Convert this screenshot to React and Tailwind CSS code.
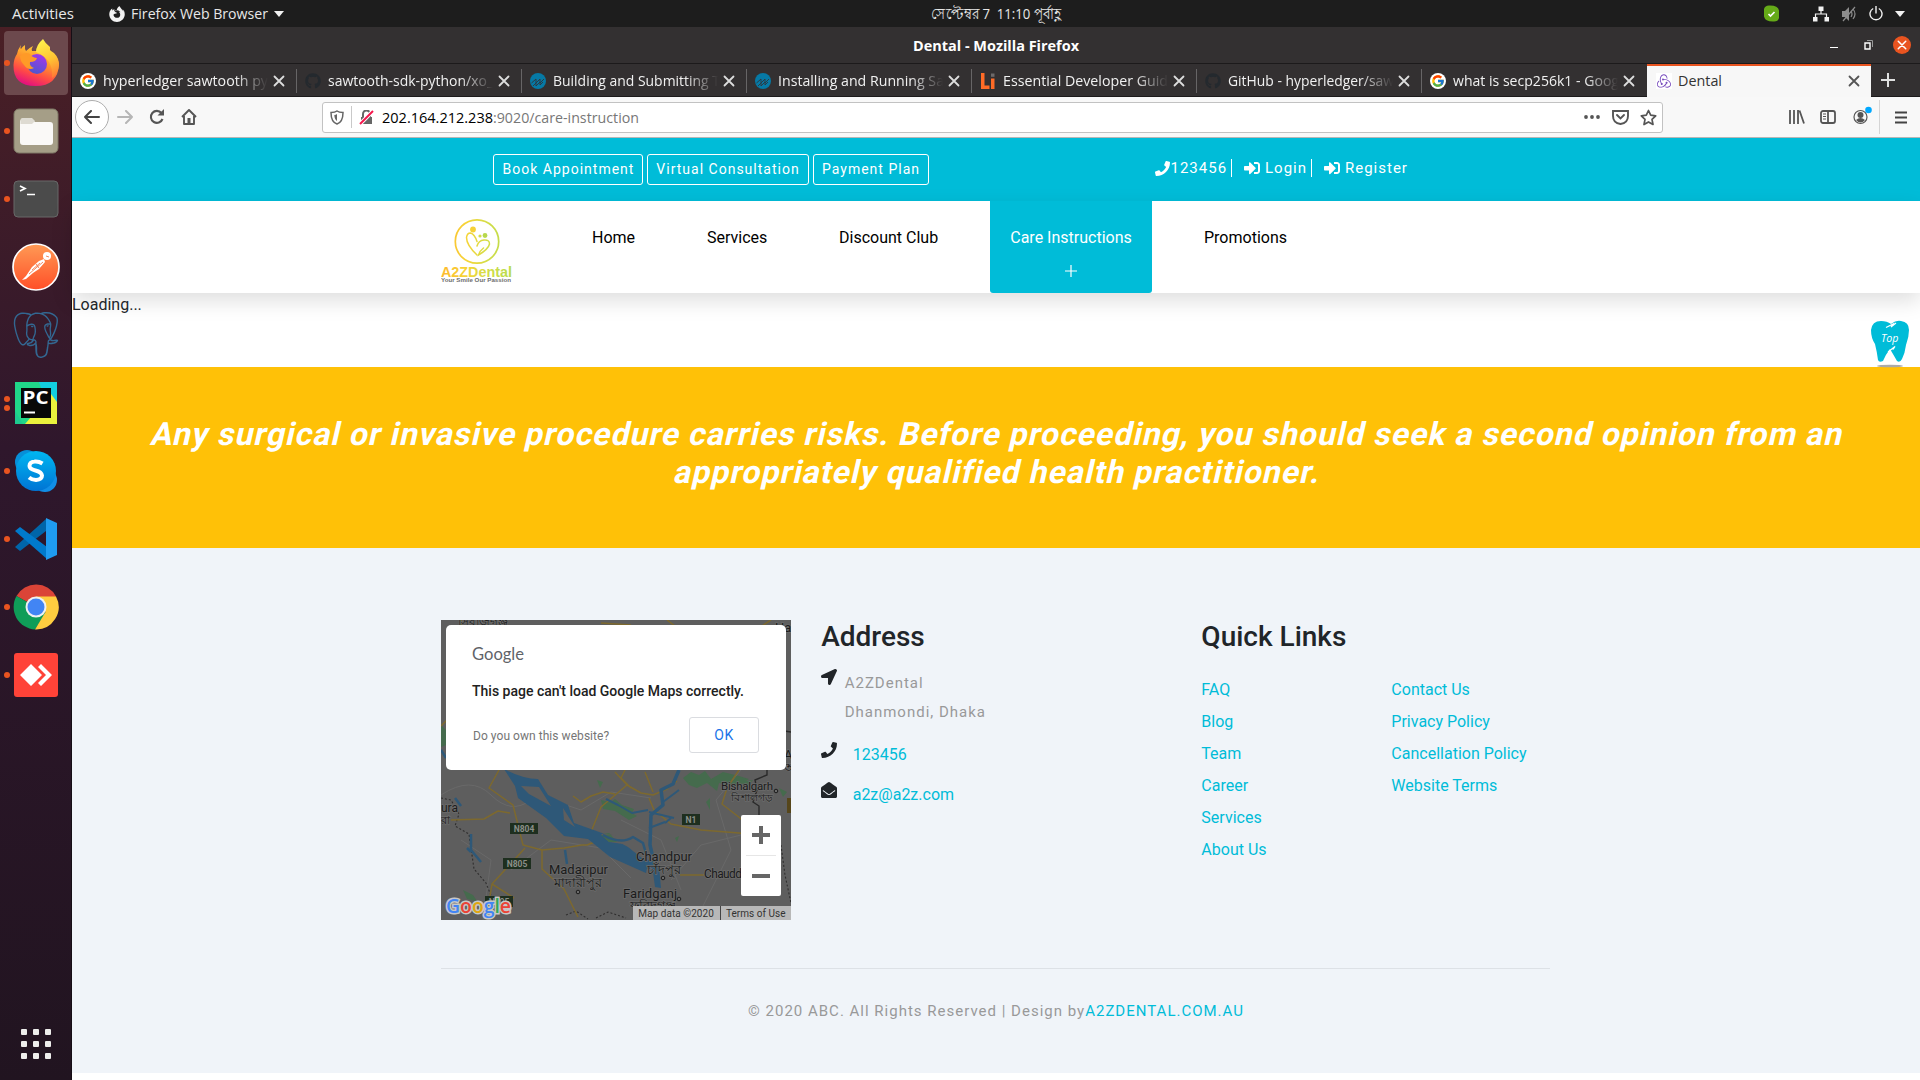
import React from "react";
import { FaPhone, FaSignInAlt, FaLocationArrow, FaEnvelopeOpen, FaGithub } from "react-icons/fa";
import { FcGoogle } from "react-icons/fc";
import { SiRedux, SiPostgresql, SiFirefoxbrowser } from "react-icons/si";

const ui = "font-['Open_Sans','Noto_Sans',sans-serif]";

function Fit({ w, children, className = "", size = 15, family = "Open Sans", weight = 400 }) {
  return (
    <svg width={w} height="20" className={`shrink-0 overflow-visible ${className}`}>
      <text x="0" y="15" fontSize={size} fontWeight={weight} fontFamily={`'${family}','Noto Sans',sans-serif`} textLength={w} lengthAdjust="spacingAndGlyphs" fill="currentColor">{children}</text>
    </svg>
  );
}

function Close({ className = "" }) {
  return (
    <svg width="12" height="12" viewBox="0 0 12 12" className={className} stroke="currentColor" strokeWidth="1.8" strokeLinecap="round">
      <path d="M1.5 1.5 10.5 10.5M10.5 1.5 1.5 10.5" />
    </svg>
  );
}

function Favicon({ kind }) {
  if (kind === "google")
    return <span className="flex size-4 items-center justify-center rounded-full bg-white"><FcGoogle size={14} /></span>;
  if (kind === "github") return <FaGithub size={16} color="#24292e" />;
  if (kind === "sawtooth")
    return (
      <svg width="16" height="16" viewBox="0 0 16 16">
        <circle cx="8" cy="8" r="8" fill="#0679a5" />
        <path d="M1.500 10 6 6v4l4-4v4l4-4M3 13l3-3v3l4-4v3l3-3" fill="none" stroke="#2c3b44" strokeWidth="1" />
      </svg>
    );
  if (kind === "li")
    return (
      <svg width="16" height="16" viewBox="0 0 16 16">
        <path d="M1 0h3.500v12.500H9.500V16H1z" fill="#ff6b26" /><path d="M11 5.500h3.500V16H11z" fill="#ff6b26" /><path d="M11 .5h3.500v3.300H11z" fill="#6d6a6b" />
      </svg>
    );
  return <span className="flex size-4 items-center justify-center bg-white"><SiRedux size={14} color="#764abc" /></span>;
}

const tabs = [
  ["google", "hyperledger sawtooth py", 165],
  ["github", "sawtooth-sdk-python/xo_", 165],
  ["sawtooth", "Building and Submitting T", 167],
  ["sawtooth", "Installing and Running Sa", 166],
  ["li", "Essential Developer Guid", 165],
  ["github", "GitHub - hyperledger/saw", 166],
  ["google", "what is secp256k1 - Goog", 166],
];

function TopPanel() {
  return (
    <header className="grid h-[27px] shrink-0 grid-cols-3 items-center bg-[#1d1d1d] text-[#e8e8e8]">
      <div className="flex items-center">
        <Fit w={62} className="ml-3">Activities</Fit>
        <SiFirefoxbrowser size={16} className="ml-[35px] text-[#f2f2f2]" />
        <Fit w={137} className="ml-[6px]">Firefox Web Browser</Fit>
        <svg width="10" height="6" className="ml-[6px]"><path d="M0 0h10L5 6z" fill="#f2f2f2" /></svg>
      </div>
      <div className="flex justify-center pl-[71px]">
        <Fit w={130} size={14.5}>{"সেপ্টেম্বর 7\u00a0 11:10 পূর্বাহ্ণ"}</Fit>
      </div>
      <div className="flex items-center justify-end pr-[15px]">
        <svg width="17" height="17" viewBox="0 0 17 17"><path d="M1 4q1-4 6-3.500 8 0 9 5V13q-1 4-6 3.500-8 0-9-5z" fill="#65aa18" /><path d="m5.500 9 2 2L11.500 7" fill="none" stroke="#fff" strokeWidth="1.700" /></svg>
        <svg width="16" height="16" viewBox="0 0 16 16" className="ml-[33px]" fill="#f2f2f2"><path d="M5.500 0.500h5v4.500h-5zM0 11h4.500v4.500H0zM11.500 11H16v4.500h-4.500z" /><path d="M8 4v4M2.500 12V8h11v4" fill="none" stroke="#f2f2f2" strokeWidth="1.200" /></svg>
        <svg width="16" height="16" viewBox="0 0 16 16" className="ml-3"><path d="M1 5h3l4-4v14l-4-4H1z" fill="#8c8c8c" /><path d="M10 5q2 3 0 6M12 3q4 5 0 10M14 1 2 15" fill="none" stroke="#8c8c8c" strokeWidth="1.2" /></svg>
        <svg width="14" height="15" viewBox="0 0 14 15" className="ml-3" fill="none" stroke="#f2f2f2" strokeWidth="1.4"><path d="M4.2 2.5a6 6 0 1 0 5.6 0M7 0v7.5" /></svg>
        <svg width="10" height="6" className="ml-[12px]"><path d="M0 0h10L5 6z" fill="#f2f2f2" /></svg>
      </div>
    </header>
  );
}

function Firefox() {
  return (
    <svg width="48" height="48" viewBox="0 0 48 48" className="-mt-[3px]">
      <defs>
        <linearGradient id="fx" x1=".75" y1=".1" x2=".35" y2="1"><stop offset="0" stopColor="#ffd53e" /><stop offset=".35" stopColor="#ff9a2b" /><stop offset=".7" stopColor="#ff4a46" /><stop offset="1" stopColor="#e3107f" /></linearGradient>
        <linearGradient id="fy" x1=".4" y1="0" x2=".7" y2="1"><stop offset="0" stopColor="#fff14a" /><stop offset=".55" stopColor="#ffc233" /><stop offset="1" stopColor="#ff7a35" /></linearGradient>
        <linearGradient id="fg" x1=".7" y1="0" x2=".3" y2="1"><stop offset="0" stopColor="#a436ea" /><stop offset="1" stopColor="#4b58cc" /></linearGradient>
      </defs>
      <path d="M9 11q1-2 4-4-.5 4 1 6 3-3 7-5-2 3-1 5h13q13 3 14 13-1 22-23.500 22T1.500 27Q2 20 5 16q.5-4 4-9-1 3 0 4z" fill="url(#fx)" />
      <path d="M24 14q0-7 7-13 2 4 7 8-.5 3 1 4l3 2q5 5 5 12-1 9-7 13 2-19-16-26z" fill="url(#fy)" />
      <circle cx="25" cy="26" r="10" fill="url(#fg)" />
      <path d="M8 18q5-5 10-2 1 3 7 4-1 4-7 4-1 4 4 6-6 3-10-3-4-4-4-9z" fill="#ff9a27" />
    </svg>
  );
}

const dock = [
  [1, <Firefox key="f" />],
  [1, <svg key="f" width="46" height="46" viewBox="0 0 46 46"><rect x="1" y="1" width="44" height="44" rx="5" fill="#a59e87" stroke="#7e7966" /><path d="M7 14q0-3 3-3h9l3 3h15q3 0 3 3v17q0 3-3 3H10q-3 0-3-3z" fill="#faf9f7" /><path d="M7.500 16v-4q0-2 2-2H19l3 3-3 3z" fill="#dedbd2" /></svg>],
  [1, <svg key="t" width="46" height="38" viewBox="0 0 46 38"><rect x="1" y="1" width="44" height="36" rx="4" fill="#4b4b4b" stroke="#686868" /><path d="m7 6 5 2.500-5 2.500M14 14.500h8" fill="none" stroke="#fff" strokeWidth="1.700" /></svg>],
  [0, <svg key="p" width="48" height="48" viewBox="0 0 48 48"><defs><linearGradient id="po" x2="0" y2="1"><stop stopColor="#ff9a55" /><stop offset="1" stopColor="#ff4f28" /></linearGradient></defs><circle cx="24" cy="24" r="23" fill="url(#po)" stroke="#fff" strokeWidth="1.700" /><circle cx="35" cy="13" r="4" fill="#fff" /><path d="m32 16 1 3-6 7-6 4-7 6-4 1 4-4 6-9 7-6z" fill="#fff" /><path d="m17 31 14-12M20 27l8-7M34 13l3 1M24 21l3 4" stroke="#f36b37" strokeWidth=".8" fill="none" /></svg>],
  [0, <SiPostgresql key="e" size={46} color="#336791" />],
  [2, <svg key="pc" width="42" height="42" viewBox="0 0 42 42"><path d="M0 0h42v42H0z" fill="#20d789" /><path d="M24 0h18v20l-8 10z" fill="#12cfe0" /><path d="M10 42 36 12l6 8v22z" fill="#eaf23d" /><path d="M0 29 8 42H0z" fill="#1dcb8f" /><path d="M6 6h30v30H6z" fill="#080808" /><text x="7.500" y="21.500" fontFamily="Open Sans" fontWeight="700" fontSize="17" textLength="26" lengthAdjust="spacingAndGlyphs" fill="#fff">PC</text><path d="M9 29.500h11v2H9z" fill="#fff" /></svg>],
  [1, <svg key="s" width="42" height="42" viewBox="0 0 42 42"><defs><linearGradient id="sk" x2="0" y2="1"><stop stopColor="#00b7f1" /><stop offset="1" stopColor="#0074d4" /></linearGradient></defs><circle cx="12" cy="12" r="12" fill="#078fd8" /><circle cx="30" cy="30" r="12" fill="#118ee6" /><circle cx="21" cy="21" r="20" fill="url(#sk)" /><path d="M27.500 13.500q-4-2.500-8-2-5 .5-5 4.500 0 3 6 4.500t6.500 5q0 4-6 4.500-4 0-7-2.500" fill="none" stroke="#fff" strokeWidth="4" /></svg>],
  [1, <svg key="v" width="42" height="42" viewBox="0 0 42 42"><path d="M0 29 31 1v12L5 33l-5-4z" fill="#0065a9" /><path d="m0 13 5-4 27 20v12L0 13z" fill="#007acc" /><path d="M31 0 42 5v32l-11 5z" fill="#1f9cf0" /></svg>],
  [1, <svg key="c" width="46" height="46" viewBox="0 0 46 46"><path d="M23 23 3.500 12A22.500 22.500 0 0 1 43 12.500z" fill="#db4437" /><path d="M23 23 3.500 12A22.500 22.500 0 0 0 22 45.500L33 29z" fill="#0f9d58" /><path d="M23 12.500h20A22.500 22.500 0 0 1 22 45.500L32.500 28z" fill="#ffcd40" /><circle cx="23" cy="23" r="10.500" fill="#f1f1f1" /><circle cx="23" cy="23" r="8.500" fill="#4285f4" /></svg>],
  [1, <svg key="a" width="44" height="44" viewBox="0 0 44 44"><rect width="44" height="44" rx="3" fill="#ff4338" /><path d="m6 22 11-11 11 11-11 11zM24 14l3-3 11 11-11 11-3-3 8-8z" fill="#fff" /></svg>],
];

function Dock() {
  return (
    <aside className="flex w-[72px] shrink-0 flex-col border-r border-[#160e16] bg-linear-to-b from-[#4a1f25] via-[#2f172c] via-40% to-[#211420] pt-[2px]">
      {dock.map(([dots, icon], i) => (
        <div key={i} className="mr-[3px] ml-[4px] flex h-[68px] shrink-0 items-center">
          <div className={`flex h-[64px] w-full items-center rounded-[4px] ${i === 0 ? "bg-[#6c494d]" : ""}`}>
            <div className="flex w-[6px] flex-col gap-[3px]">
              {Array.from({ length: dots }, (_, d) => <i key={d} className="size-[6px] rounded-full bg-[#e95420]" />)}
            </div>
            <div className="-ml-[6px] flex flex-1 items-center justify-center">{icon}</div>
          </div>
        </div>
      ))}
      <div className="mt-auto mb-[21px] ml-[21px] grid w-[30px] grid-cols-3 gap-[6px]">
        {Array.from({ length: 9 }, (_, i) => <i key={i} className="size-[6px] rounded-[1px] bg-[#eeeeec]" />)}
      </div>
    </aside>
  );
}

function BrowserChrome() {
  return (
    <>
      <div className="flex h-[37px] shrink-0 items-center border-b border-[#1c1a1b] bg-[#333031] text-white">
        <div className="w-[150px]" />
        <div className="flex flex-1 justify-center pt-[2px]"><Fit w={166} size={15} weight={700}>Dental - Mozilla Firefox</Fit></div>
        <div className="flex w-[150px] items-center justify-end pr-[9px]">
          <i className="mt-[5px] h-px w-2 bg-white" />
          <svg width="9" height="10" viewBox="0 0 9 10" className="ml-[26px]" fill="none" stroke="#fff"><path d="M1 3h5v6H1z" strokeWidth="1.400" /><path d="M3 .5h5.500V7" stroke="#999" /></svg>
          <span className="ml-[20px] flex size-[18px] items-center justify-center rounded-full bg-[#e95420]"><Close className="size-[10px]" /></span>
        </div>
      </div>
      <div className="flex h-[33px] shrink-0 border-b border-[#1c1a1b] bg-[#333031] text-[#f1f1f1]">
        {tabs.map(([kind, label, w], i) => (
          <div key={i} className="flex w-[225px] shrink-0 items-center pt-px pl-2">
            <Favicon kind={kind} />
            <div className="ml-[7px] w-[165px] overflow-hidden mask-r-from-80% mask-r-to-100%"><Fit w={w}>{label}</Fit></div>
            <Close className="ml-[5px] text-[#ddd]" />
            {i < 6 && <i className="ml-auto h-6 w-px bg-[#676566]" />}
          </div>
        ))}
        <div className="-mb-px flex h-[33px] w-[224px] shrink-0 items-center border-t-2 border-[#e95420] bg-[#f7f7f7] pb-[2px] pl-[9px]">
          <Favicon kind="redux" />
          <Fit w={44} className="ml-[6px] text-[#333]">Dental</Fit>
          <Close className="mr-[11px] ml-auto text-[#555]" />
        </div>
        <svg width="14" height="14" viewBox="0 0 14 14" className="mt-[9px] ml-[10px]" stroke="#e0e0e0" strokeWidth="2"><path d="M7 0v14M0 7h14" /></svg>
      </div>
      <div className="flex h-[41px] shrink-0 items-center border-b border-[#b6b6b6] bg-[#f8f8f8] text-[#555]">
        <span className="ml-[3px] flex size-[34px] items-center justify-center rounded-full border border-[#adadad] bg-white">
          <svg width="16" height="14" viewBox="0 0 16 14" fill="none" stroke="#444" strokeWidth="2" strokeLinecap="round" strokeLinejoin="round"><path d="M15 7H1M7 1 1 7l6 6" /></svg>
        </span>
        <svg width="16" height="14" viewBox="0 0 16 14" className="ml-[8px]" fill="none" stroke="#b6b6b6" strokeWidth="2" strokeLinecap="round" strokeLinejoin="round"><path d="M1 7h14M9 1l6 6-6 6" /></svg>
        <svg width="16" height="16" viewBox="0 0 16 16" className="ml-[16px]" fill="none" stroke="#555" strokeWidth="2.100"><path d="M12.500 4A6 6 0 1 0 13.500 10" /><path d="M15 0v6.500H8.500z" fill="#555" stroke="none" /></svg>
        <svg width="16" height="16" viewBox="0 0 16 16" className="ml-[16px]" fill="none" stroke="#555" strokeWidth="1.900" strokeLinejoin="round"><path d="M1 8 8 1l7 7M3 7v8h10V7" /><path d="M6.500 9h3v5h-3z" fill="#555" stroke="none" /></svg>
        <div className="ml-[125px] flex h-[31px] w-[1341px] items-center rounded-[3px] border border-[#c2c2c2] bg-white">
          <svg width="14" height="15" viewBox="0 0 14 15" className="ml-[7px]" fill="none" stroke="#666" strokeWidth="1.500"><path d="M1 2.500Q5 2.500 7 1q2 1.500 6 1.500Q13 12 7 14 1 12 1 2.500z" /><path d="M7 4v7Q4.500 9.500 4.300 5 6 4.800 7 4z" fill="#666" stroke="none" /></svg>
          <i className="ml-[7px] h-[22px] w-px bg-[#c9c9c9]" />
          <svg width="15" height="15" viewBox="0 0 15 15" className="ml-[7px]"><path d="M4 7V4a3.500 3.500 0 0 1 7 0v3" fill="none" stroke="#666" strokeWidth="2" /><path d="M2 7h11v7H2z" fill="#666" /><path d="M14 1 1 14" stroke="#fff" strokeWidth="4" /><path d="M14 1 1 14" stroke="#f5174d" strokeWidth="2" /></svg>
          <div className="mt-px ml-[8px] flex text-black"><Fit w={111} size={14.5}>202.164.212.238</Fit><Fit w={146} size={14.5} className="text-[#777]">:9020/care-instruction</Fit></div>
          <svg width="16" height="4" viewBox="0 0 16 4" className="ml-auto" fill="#555"><circle cx="2" cy="2" r="1.900" /><circle cx="8" cy="2" r="1.900" /><circle cx="14" cy="2" r="1.900" /></svg>
          <svg width="17" height="15" viewBox="0 0 17 15" className="ml-[12px]" fill="none" stroke="#555" strokeWidth="1.900"><path d="M1 1h15v5q0 7-7.500 8Q1 13 1 6z" /><path d="m5 5 3.500 3.500L12 5" strokeLinecap="round" /></svg>
          <svg width="17" height="17" viewBox="0 0 17 17" className="mr-[5px] ml-[11px]" fill="none" stroke="#555" strokeWidth="1.700" strokeLinejoin="round"><path d="m8.500 1.500 2.200 4.700 5 .6-3.700 3.500 1 5.200-4.500-2.600L4 15.500l1-5.200-3.700-3.500 5-.6z" /></svg>
        </div>
        <svg width="16" height="14" viewBox="0 0 16 14" className="ml-[126px]" fill="none" stroke="#555" strokeWidth="1.800"><path d="M1 0v14M5 0v14M9 0v14M10.500.5 15 13.500" /></svg>
        <svg width="16" height="14" viewBox="0 0 16 14" className="ml-[15px]" fill="none" stroke="#555" strokeWidth="1.800"><rect x="1" y="1" width="14" height="12" rx="2" /><path d="M8 1v12" /><path d="M3 4h3M3 6.500h3M3 9h3" strokeWidth="1" /></svg>
        <svg width="19" height="20" viewBox="0 0 19 20" className="mt-[-2px] ml-[17px]"><circle cx="7.500" cy="11" r="6.500" fill="none" stroke="#555" strokeWidth="1.200" /><circle cx="7.500" cy="9" r="3" fill="#555" /><path d="M3 14q4.500-4 9 0-4.500 5-9 0z" fill="#555" /><circle cx="15.500" cy="4" r="3.300" fill="#00a8ff" /></svg>
        <i className="ml-[7px] h-[34px] w-px bg-[#d5d5d5]" />
        <svg width="12" height="13" viewBox="0 0 12 13" className="ml-[15px]" stroke="#444" strokeWidth="2"><path d="M0 1.500h12M0 6.500h12M0 11.500h12" /></svg>
      </div>
    </>
  );
}

function Logo() {
  return (
    <svg width="72" height="68" viewBox="0 0 72 68">
      <defs><linearGradient id="lg" gradientUnits="userSpaceOnUse" x1="0" x2="72"><stop stopColor="#fdb92f" /><stop offset=".35" stopColor="#f6d437" /><stop offset=".65" stopColor="#d3dd48" /><stop offset="1" stopColor="#b5db4c" /></linearGradient></defs>
      <circle cx="36" cy="24.500" r="21.700" fill="none" stroke="url(#lg)" strokeWidth="1.700" />
      <circle cx="32" cy="12.500" r="2.900" fill="#f6d137" /><circle cx="44" cy="18.500" r="2.400" fill="#b8d84c" /><circle cx="39" cy="19" r="1.600" fill="#d4dc48" />
      <g fill="none" stroke="url(#lg)" strokeWidth="1.500" strokeLinecap="round">
        <path d="M36 38Q25.500 28 25.500 20.500q.5-4.500 4-4.500 4 1 6.500 8.500" />
        <path d="M36 29q1.500-5.500 7-6 5.500-.5 5.500 4-1 5-11 11 1-4 5-7" />
      </g>
      <text x="0" y="59.500" fontFamily="Liberation Sans" fontWeight="700" fontSize="14" textLength="71" lengthAdjust="spacingAndGlyphs" fill="url(#lg)">A2ZDental</text>
      <text x="0" y="65" fontFamily="Liberation Sans" fontWeight="700" fontSize="5.500" textLength="70" lengthAdjust="spacingAndGlyphs" fill="#6d6d6d">Your Smile Our Passion</text>
    </svg>
  );
}

function SiteHeader() {
  return (
    <>
      <div className="flex h-[63px] shrink-0 bg-[#00bcd8] pl-[421px] text-[15px] tracking-[1px] text-white">
        <div className="mt-4 flex h-[31px] gap-1 text-[14px] leading-[29px]">
          <a className="w-[150px] rounded-[3px] border border-white pl-px text-center">Book Appointment</a>
          <a className="w-[162px] rounded-[3px] border border-white text-center">Virtual Consultation</a>
          <a className="w-[116px] rounded-[3px] border border-white text-center">Payment Plan</a>
        </div>
        <div className="mt-[21px] ml-[226px] flex h-[18px] items-center leading-[18px]">
          <FaPhone size={15} /><span className="w-[62px] border-r border-white pl-[0.5px]">123456</span>
          <FaSignInAlt size={16} className="ml-[12px]" /><span className="ml-[5px] w-[47px] border-r border-white">Login</span>
          <FaSignInAlt size={16} className="ml-[12px]" /><span className="ml-[5px]">Register</span>
        </div>
      </div>
      <nav className="relative flex h-[92px] shrink-0 bg-white pl-[369px] leading-6 text-black shadow-[0_8px_20px_rgba(0,0,0,0.13)]">
        <div className="mt-4 w-[151px]"><Logo /></div>
        <a className="mt-[25px] w-[115px]">Home</a>
        <a className="mt-[25px] w-[132px]">Services</a>
        <a className="mt-[25px] w-[151px]">Discount Club</a>
        <a className="flex h-[92px] w-[162px] flex-col items-center rounded-b-[3px] bg-[#00bcd8] pt-[25px] text-white">Care Instructions
          <svg width="12" height="12" viewBox="0 0 12 12" className="mt-[15px]" stroke="#fff" strokeWidth="1.200"><path d="M6 0v12M0 6h12" /></svg>
        </a>
        <a className="mt-[25px] ml-[52px]">Promotions</a>
      </nav>
    </>
  );
}

function Shield({ x, y, w = 28, children }) {
  return <g><rect x={x} y={y} width={w} height="11" fill="#1e2f1f" /><text x={x + w / 2} y={y + 8.700} textAnchor="middle" fontSize="8.500" fontWeight="700" fill="#8b8f88">{children}</text></g>;
}

function MapArt() {
  return (
    <svg width="350" height="300" viewBox="0 0 350 300" fontFamily="Roboto, 'Noto Sans', sans-serif">
      <path d="M0 0h350v300H0z" fill="#5e5e5e" />
      <path d="M0 105l5 5v15l-5 2zM160 180l10 2 4-3 7 6 12 4-2 4 5 3-8 4-14-9-12-2zM242 158l8-6 8 3 6-4 6 8 12-7 16 4 10 3-12 8-18-4-2 8-10-8-10 5-8-3zM300 162l12-2-6 8zM265 182l4-4v12zM234 218l4-2-2 6zM156 215l12-2 9 7-4 4-10-3zM22 270l10 5 4 6-10-2zM156 160l6 2-3 6zM338 168l8 4-4 5zM322 240l4-3 2 4z" fill="#456b4d" />
      <g fill="none" stroke="#696969" strokeWidth="1">
        <path d="M0 175q30-20 50 0t40 5 40 20M110 180l30 10 30-18 40 6M70 250l40-30 50 8 30 30M230 260l30-35 40-10M300 150l-25 30 15 50-30 60M20 220l30 20-8 60M180 200l40 20 20 50" />
      </g>
      <g fill="none" stroke="#302f2f" strokeWidth="1.100" strokeDasharray="2 2"><path d="M0 178 10 180l8 14-4 12 14 8 5 35 12 14 8 20 3 12M125 295l10-4 12 8M155 298l12-6 18 6M340 225l4 30 6 28" /></g>
      <path d="M326 150v5l-12 5 2 10-4 12 6 4v14M337 110l13 2" fill="none" stroke="#2a2a2a" strokeWidth="1.400" />
      <g fill="none" stroke="#7d692e" strokeWidth="1.500" strokeLinejoin="round">
        <path d="M58 150 48 168l24 17 10 40 19 5 22-2 18-3h5l10-4M10 200l33-1 14-8 12 2M101 230v19l22 20 14 28M84 228l-33 36 22 14M51 264l-6 36M150 212l10-25 26-22-12-13M186 165l14 8 12 2 14-6 10-8M132 176l8 6 10-6 12-4 12 2M208 178l5 12 17 14 30 6 38 3 32 5M212 172l-8-20M190 168l-10-10 4-8M298 150l-12 18-5 16 18 14 10 10 14 4M239 255h24M325 112l-14 26-6 12M8 98l-8 8" />
        <path d="M20 0v8l6 4M160 3l30 2M226 0l8 6M330 0l-15 10" />
      </g>
      <path d="M63 149q18 10 34 10l10 16 20 10 6 18 28 10 26 14 20 16-2 10-36-16-22-18-24-3-18-18-28-20-3-12z" fill="#2e5878" />
      <path d="m80 166 18 1 12 19-22-12zM122 188l12 19-11-7zM160 214l14 1 8 9-14-2z" fill="#5e5e5e" />
      <path d="m160 215 10 0 6 7-8 0z" fill="#456b4d" />
      <g fill="none" stroke="#2e5878" strokeLinejoin="round">
        <path d="M162 215q18 10 30 2l10 6 4 14" strokeWidth="2.500" />
        <path d="M238 150l-6 14-12 6 2 15-12 10-1 30 5 22 3 18" strokeWidth="3.500" /><path d="M238 170l-16 12M208 192l25 6M208 208l16-6M207 190l-16 3-14-8-12-6M224 203l6-5" strokeWidth="2" /><path d="M0 130l5 8M14 178l6 8M30 214v16l10 12M30 232l-4-4M124 230l2 14" strokeWidth="2.500" />
      </g>
      <path d="m204 238 14 8 2 22-6-1-2-15-9-6z" fill="#2e5878" />
      <g fill="#1b1b1b" stroke="#6b6b6b" strokeWidth="1.500" paintOrder="stroke" fontSize="13">
        <text x="17" y="6" fontSize="12">সিরাজগঞ্জ</text><text x="334" y="12">Ha</text>
        <text x="280" y="170" fontSize="11.500" textLength="52">Bishalgarh</text><text x="290" y="181" fontSize="10" textLength="42" lengthAdjust="spacingAndGlyphs">বিশালগড়</text>
        <text x="0" y="192" fontSize="12">ura</text><text x="0" y="204" fontSize="11">রা</text>
        <text x="195" y="241" textLength="56">Chandpur</text><text x="206" y="254" textLength="34" lengthAdjust="spacingAndGlyphs">চাঁদপুর</text>
        <text x="108" y="254" textLength="59">Madaripur</text><text x="113" y="267" textLength="48" lengthAdjust="spacingAndGlyphs">মাদারীপুর</text>
        <text x="263" y="258" fontSize="12" textLength="38">Chaudd</text><text x="182" y="278" textLength="54">Faridganj</text><text x="189" y="289" fontSize="11" textLength="46" lengthAdjust="spacingAndGlyphs">ফরিদগঞ্জ</text>
        <text x="343" y="139">A</text><text x="343" y="152">অ</text>
      </g>
      <g fill="#6b6b6b" stroke="#1b1b1b"><circle cx="335" cy="171" r="1.800" /><circle cx="222" cy="258" r="1.800" /><circle cx="137" cy="272" r="1.800" /><circle cx="238" cy="279" r="1.800" /></g>
      <Shield x={69} y={203}>N804</Shield><Shield x={62} y={238}>N805</Shield><Shield x={241} y={194} w={18}>N1</Shield><Shield x={44} y={276}>N805</Shield>
      <path d="M346 178h4v15h-4z" fill="#56461b" />
      <text x="5" y="293" fontFamily="Open Sans" fontSize="20" fontWeight="600" textLength="65" lengthAdjust="spacingAndGlyphs" stroke="#c8c8c8" strokeWidth="3" paintOrder="stroke"><tspan fill="#4285f4">G</tspan><tspan fill="#ea4335">o</tspan><tspan fill="#dfa611">o</tspan><tspan fill="#4285f4">g</tspan><tspan fill="#34a853">l</tspan><tspan fill="#ea4335">e</tspan></text>
    </svg>
  );
}

function MapCard() {
  return (
    <div className="relative h-[300px] w-[350px] overflow-hidden">
      <MapArt />
      <div className="absolute top-[5px] left-[5px] flex h-[145px] w-[340px] flex-col rounded-[5px] bg-white pr-[27px] pl-[26px]">
        <span className="mt-[20px] flex h-[21px] text-[#5f6368]"><Fit w={52} size={18} family="Lato">Google</Fit></span>
        <p className="mt-[15px] text-[14px] leading-5 font-medium whitespace-nowrap text-[#212121]">This page can't load Google Maps correctly.</p>
        <div className="mt-[16px] flex items-center justify-between pl-px text-[12px] tracking-[0.05px] text-[#757575]"><span className="pt-[2px]">Do you own this website?</span>
          <button className="h-9 w-[70px] rounded-[3px] border border-[#dadce0] text-[14px] tracking-[0.6px] text-[#1a73e8]">OK</button>
        </div>
      </div>
      <div className="absolute top-[195px] left-[300px] flex h-[81px] w-10 flex-col items-center rounded-[2px] bg-white">
        <svg width="18" height="18" viewBox="0 0 18 18" className="mt-[11px]" stroke="#666" strokeWidth="4"><path d="M9 0v18M0 9h18" /></svg>
        <i className="mt-[11px] h-px w-[30px] bg-[#e6e6e6]" />
        <i className="mt-[18px] h-1 w-[18px] bg-[#666]" />
      </div>
      <div className="absolute right-0 bottom-0 flex h-[14px] items-center bg-[#b8b8b8] text-[10px] leading-[14px] tracking-[0.05px] text-[#333]">
        <span className="pt-px pr-[6px] pl-[5px]">Map data ©2020</span><span className="border-l border-[#444] px-[5px] pt-px">Terms of Use</span>
      </div>
    </div>
  );
}

function Footer() {
  return (
    <footer className="flex h-[525px] shrink-0 flex-col bg-[#f0f4f9] pt-[72px] pr-[370px] pl-[369px] text-[#212529]">
      <div className="flex">
        <MapCard />
        <section className="ml-[30px] w-[350px]">
          <h3 className="pl-[0.5px] text-[28px] leading-[34px] font-medium">Address</h3>
          <div className="mt-[14px] flex"><FaLocationArrow size={16} className="mt-px" /><p className="mt-px ml-2 text-[15px] leading-[29px] tracking-[1px] text-[#999]">A2ZDental<br />Dhanmondi, Dhaka</p></div>
          <div className="mt-[15px] flex text-[#00bcd8]"><FaPhone size={16} color="#212529" /><a className="mt-px ml-4">123456</a></div>
          <div className="mt-[15px] flex text-[#00bcd8]"><FaEnvelopeOpen size={16} color="#212529" /><a className="mt-px ml-4">a2z@a2z.com</a></div>
        </section>
        <section className="ml-[31px] w-[349px]">
          <h3 className="text-[28px] leading-[34px] font-medium">Quick Links</h3>
          <div className="mt-5 grid grid-cols-[190px_1fr] leading-8 text-[#00bcd8]">
            <ul>{["FAQ", "Blog", "Team", "Career", "Services", "About Us"].map((t) => <li key={t}>{t}</li>)}</ul>
            <ul>{["Contact Us", "Privacy Policy", "Cancellation Policy", "Website Terms"].map((t) => <li key={t}>{t}</li>)}</ul>
          </div>
        </section>
      </div>
      <div className="mt-12 w-[1109px] border-t border-[#dde1e6] pt-[28px] pl-px text-center text-[15px] leading-[29px] tracking-[1px] text-[#999]">© 2020 ABC. All Rights Reserved | Design by<a className="text-[#00bcd8]">A2ZDENTAL.COM.AU</a></div>
    </footer>
  );
}

function TopTooth() {
  return (
    <svg width="42" height="50" viewBox="0 0 42 50" className="absolute top-[26px] right-[9px]">
      <ellipse cx="21" cy="47" rx="13" ry="1.300" fill="#aaa" />
      <path d="M2 11Q3 2 12 2q6 0 10 3 5-4 10-3 8 1 8 9 0 7-3 15-1 8-4 14-2 4-5 2-4-7-7-12-4 5-7 12-4 2-5-1Q8 33 6 25 2 19 2 11z" fill="#00bcd8" />
      <path d="m17 8.500 7-3.500-2 3 5-4M19 33l7-5.500-2 3" fill="none" stroke="#fff" strokeWidth="1.200" />
      <text x="12" y="22.500" fontFamily="Open Sans" fontStyle="italic" fontSize="11.500" textLength="17.500" lengthAdjust="spacingAndGlyphs" fill="#fff">Top</text>
    </svg>
  );
}

export default function App() {
  return (
    <div className="flex h-[1080px] w-[1920px] flex-col overflow-hidden bg-white">
      <TopPanel />
      <div className="flex min-h-0 flex-1">
        <Dock />
        <main className={`flex w-[1848px] flex-col ${ui}`}>
          <BrowserChrome />
          <div className="flex flex-1 flex-col bg-white font-[Roboto,sans-serif] text-[16px] text-[#212529]">
            <SiteHeader />
            <div className="relative h-[74px] shrink-0 leading-6"><p className="relative">Loading...</p><TopTooth /></div>
            <div className="flex h-[181px] shrink-0 flex-col items-center bg-[#ffc107] pt-[48px] pl-[5px] text-center text-[32px] leading-[38.4px] font-bold tracking-[1px] whitespace-nowrap text-white">
              <p className="-skew-x-[13deg]">Any surgical or invasive procedure carries risks. Before proceeding, you should seek a second opinion from an</p>
              <p className="-skew-x-[13deg]">appropriately qualified health practitioner.</p>
            </div>
            <Footer />
          </div>
        </main>
      </div>
    </div>
  );
}
